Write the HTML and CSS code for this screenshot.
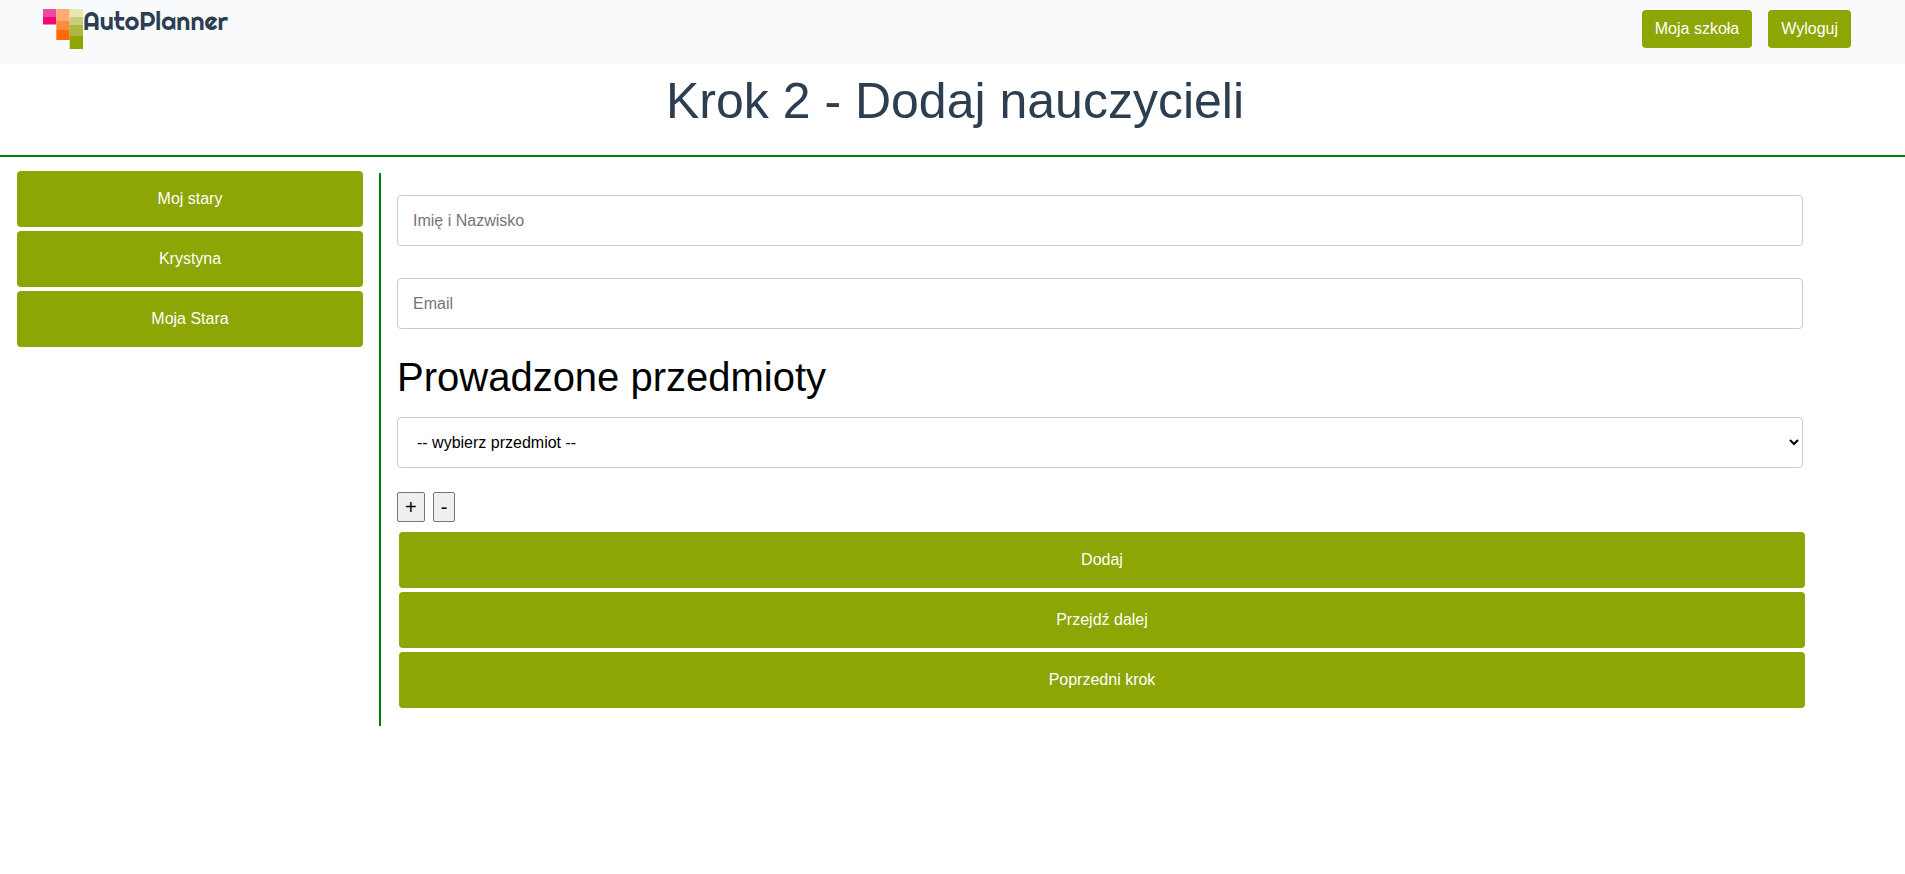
FILE: index.html
```html
<!DOCTYPE html>
<html lang="pl">
<head>
<meta charset="utf-8">
<meta name="viewport" content="width=device-width, initial-scale=1">
<title>AutoPlanner</title>
<link rel="stylesheet" href="styles.css">
</head>
<body>
<header class="topbar">
  <a class="brand" href="#">
    <svg class="brand-logo" viewBox="0 0 40 40" aria-hidden="true">
      <path fill="#f0489f" d="M0 0h13.300v8H0z"/>
      <path fill="#ee0979" d="M0 8h13.300v7.500H0z"/>
      <path fill="#ffab73" d="M13.300 0h13.400v12H13.300z"/>
      <path fill="#ff8a3b" d="M13.300 12h13.400v9H13.300z"/>
      <path fill="#ff6a00" d="M13.300 21h13.400v10H13.300z"/>
      <path fill="#e8e8b0" d="M26.700 0H40v8H26.700z"/>
      <path fill="#c9cd80" d="M26.700 8H40v8H26.700z"/>
      <path fill="#abb740" d="M26.700 16H40v11H26.700z"/>
      <path fill="#8da505" d="M26.700 27H40v13H26.700z"/>
    </svg>
    <span class="brand-name">AutoPlanner</span>
  </a>
  <nav class="topnav">
    <a class="nav-button" href="#">Moja szkoła</a>
    <a class="nav-button" href="#">Wyloguj</a>
  </nav>
</header>
<h1 class="page-title">Krok 2 - Dodaj nauczycieli</h1>
<div class="layout">
  <aside class="teachers">
    <button class="button" type="button">Moj stary</button>
    <button class="button" type="button">Krystyna</button>
    <button class="button" type="button">Moja Stara</button>
  </aside>
  <main class="editor">
    <form class="form">
      <input class="field" type="text" placeholder="Imię i Nazwisko" aria-label="Imię i Nazwisko">
      <input class="field" type="email" placeholder="Email" aria-label="Email">
      <h2 class="section-title" id="subjects">Prowadzone przedmioty</h2>
      <select class="field subject" aria-labelledby="subjects">
        <option>-- wybierz przedmiot --</option>
      </select>
      <div class="counter">
        <button class="counter-button" type="button">+</button>
        <button class="counter-button" type="button">-</button>
      </div>
      <div class="actions">
        <button class="button" type="button">Dodaj</button>
        <button class="button" type="button">Przejdź dalej</button>
        <button class="button" type="button">Poprzedni krok</button>
      </div>
    </form>
  </main>
</div>
</body>
</html>
```

FILE: styles.css
```css
* {
  box-sizing: border-box;
}

body {
  margin: 0;
  background: #fff;
  color: #000;
  font-family: "Liberation Sans", Arial, sans-serif;
  font-size: 16px;
}

.topbar {
  display: flex;
  justify-content: space-between;
  align-items: flex-start;
  height: 64px;
  padding: 9px 54px 0 43px;
  background: #f8fafc;
}

.brand {
  display: flex;
  color: #2c3e50;
  text-decoration: none;
}

.brand-logo {
  width: 40px;
  height: 40px;
}

.brand-name {
  font-family: Righteous, Lato, sans-serif;
  font-size: 25px;
  font-weight: 400;
  line-height: 24px;
}

.topnav {
  display: flex;
  gap: 16px;
  padding-top: 1px;
}

.nav-button {
  padding: 0 13px;
  border-radius: 4px;
  background: #8da505;
  color: #fff;
  line-height: 38px;
  text-decoration: none;
}

.page-title {
  margin: 0;
  padding: 8px 0 25px 5px;
  border-bottom: 2px solid #008000;
  color: #2c3e50;
  font-size: 50px;
  font-weight: 400;
  line-height: 58px;
  text-align: center;
}

.layout {
  display: grid;
  grid-template-columns: 20% 1fr;
  padding-top: 14px;
}

.teachers {
  display: flex;
  flex-direction: column;
  gap: 4px;
  padding: 0 18px 0 17px;
}

.button {
  width: 100%;
  height: 56px;
  padding: 0;
  border: 0;
  border-radius: 4px;
  background: #8da505;
  color: #fff;
  font: inherit;
  cursor: pointer;
}

.editor {
  margin: 2px 0 0 -2px;
  padding: 22px 102px 18px 16px;
  border-left: 2px solid #008000;
}

.form {
  display: flex;
  flex-direction: column;
}

.field {
  width: 100%;
  height: 51px;
  margin: 0 0 32px;
  padding: 0 15px;
  border: 1px solid #ccc;
  border-radius: 4px;
  background: #fff;
  color: #000;
  font: inherit;
}

.field::placeholder {
  color: #757575;
}

.section-title {
  margin: -7px 0 17px;
  font-size: 40px;
  font-weight: 400;
  line-height: 46px;
}

.subject {
  margin-bottom: 24px;
}

.counter {
  display: flex;
  gap: 8px;
  margin-bottom: 10px;
}

.counter-button {
  height: 30px;
  padding: 1px 7px;
  border: 1px solid #767676;
  border-radius: 2px;
  background: #efefef;
  color: #000;
  font-family: inherit;
  font-size: 20px;
}

.actions {
  display: flex;
  flex-direction: column;
  gap: 4px;
  margin: 0 -2px 0 2px;
}
```
